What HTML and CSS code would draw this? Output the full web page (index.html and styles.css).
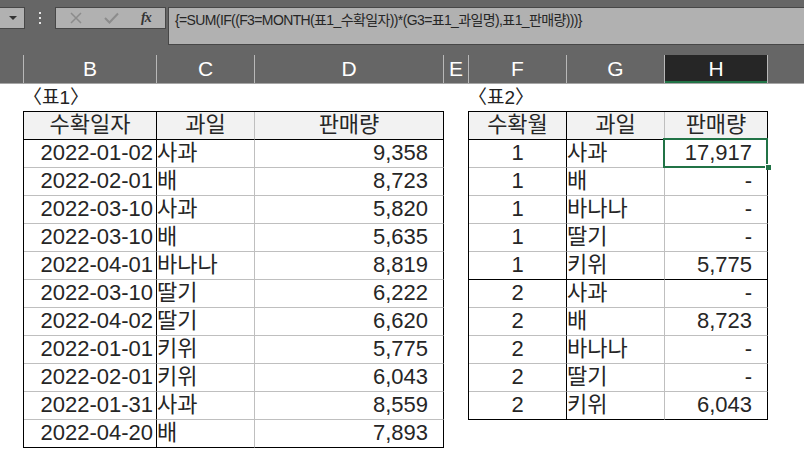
FILE: index.html
```html
<!DOCTYPE html>
<html lang="ko">
<head>
<meta charset="utf-8">
<link rel="stylesheet" href="styles.css">
</head>
<body>
<div class="app">
  <div class="toolbar">
    <div class="namebox">
      <svg class="drop" width="8" height="5" viewBox="0 0 8 5"><path d="M0 0H8L4 4Z" fill="#333"/></svg>
    </div>
    <div class="grip">
      <svg width="4" height="14" viewBox="0 0 4 14"><rect x="1" y="1" width="2" height="2" fill="#e6e6e6"/><rect x="1" y="6" width="2" height="2" fill="#e6e6e6"/><rect x="1" y="11" width="2" height="2" fill="#e6e6e6"/></svg>
    </div>
    <div class="fxbox">
      <svg class="ico-x" width="12" height="12" viewBox="0 0 12 12"><path d="M1 1L11 11M11 1L1 11" stroke="#8c8c8c" stroke-width="1.5" fill="none"/></svg>
      <svg class="ico-ok" width="15" height="12" viewBox="0 0 15 12"><path d="M1 6L5.5 10.5L14 1.5" stroke="#8c8c8c" stroke-width="2" fill="none"/></svg>
      <span class="fx">fx</span>
    </div>
    <div class="formula">{=SUM(IF((F3=MONTH(표1_수확일자))*(G3=표1_과일명),표1_판매량)))}</div>
  </div>

  <div class="colheads">
    <div class="ch ch-a"></div>
    <div class="ch ch-b">B</div>
    <div class="ch ch-c">C</div>
    <div class="ch ch-d">D</div>
    <div class="ch ch-e">E</div>
    <div class="ch ch-f">F</div>
    <div class="ch ch-g">G</div>
    <div class="ch ch-h">H</div>
    <div class="ch ch-rest"></div>
  </div>

  <div class="sheet">
    <div class="block block1">
      <div class="title">〈표1〉</div>
      <div class="grid t1">
        <div class="c hd dark">수확일자</div><div class="c hd">과일</div><div class="c hd last">판매량</div>

        <div class="c date dark">2022-01-02</div><div class="c fruit">사과</div><div class="c num last">9,358</div>
        <div class="c date dark">2022-02-01</div><div class="c fruit">배</div><div class="c num last">8,723</div>
        <div class="c date dark">2022-03-10</div><div class="c fruit">사과</div><div class="c num last">5,820</div>
        <div class="c date dark">2022-03-10</div><div class="c fruit">배</div><div class="c num last">5,635</div>
        <div class="c date dark">2022-04-01</div><div class="c fruit">바나나</div><div class="c num last">8,819</div>
        <div class="c date dark">2022-03-10</div><div class="c fruit">딸기</div><div class="c num last">6,222</div>
        <div class="c date dark">2022-04-02</div><div class="c fruit">딸기</div><div class="c num last">6,620</div>
        <div class="c date dark">2022-01-01</div><div class="c fruit">키위</div><div class="c num last">5,775</div>
        <div class="c date dark">2022-02-01</div><div class="c fruit">키위</div><div class="c num last">6,043</div>
        <div class="c date dark">2022-01-31</div><div class="c fruit">사과</div><div class="c num last">8,559</div>
        <div class="c date dark bot">2022-04-20</div><div class="c fruit bot">배</div><div class="c num last bot">7,893</div>
      </div>
    </div>

    <div class="block block2">
      <div class="title">〈표2〉</div>
      <div class="grid t2">
        <div class="c hd dark">수확월</div><div class="c hd">과일</div><div class="c hd last">판매량</div>

        <div class="c mon dark">1</div><div class="c fruit">사과</div><div class="c num last sel">17,917<span class="selbox"></span><span class="handle"></span></div>
        <div class="c mon dark">1</div><div class="c fruit">배</div><div class="c num last">-</div>
        <div class="c mon dark">1</div><div class="c fruit">바나나</div><div class="c num last">-</div>
        <div class="c mon dark">1</div><div class="c fruit">딸기</div><div class="c num last">-</div>
        <div class="c mon dark bot">1</div><div class="c fruit bot">키위</div><div class="c num last bot">5,775</div>
        <div class="c mon dark">2</div><div class="c fruit">사과</div><div class="c num last">-</div>
        <div class="c mon dark">2</div><div class="c fruit">배</div><div class="c num last">8,723</div>
        <div class="c mon dark">2</div><div class="c fruit">바나나</div><div class="c num last">-</div>
        <div class="c mon dark">2</div><div class="c fruit">딸기</div><div class="c num last">-</div>
        <div class="c mon dark bot">2</div><div class="c fruit bot">키위</div><div class="c num last bot">6,043</div>
      </div>
    </div>
  </div>
</div>
</body>
</html>
```

FILE: styles.css
```css
* { box-sizing: border-box; }

html, body {
  margin: 0;
  padding: 0;
  background: #ffffff;
}

.app {
  width: 804px;
  height: 474px;
  overflow: hidden;
  background: #ffffff;
  font-family: "Liberation Sans", "Noto Sans CJK KR", sans-serif;
}

/* ---------- formula bar ---------- */
.toolbar {
  height: 55px;
  background: #666666;
  display: flex;
  align-items: flex-start;
  padding-top: 7px;
}

.namebox {
  width: 25px;
  height: 22px;
  background: #b1b1b1;
  border: 1px solid #474747;
  border-left: none;
  display: flex;
  align-items: center;
  justify-content: flex-end;
  padding-right: 7px;
}

.grip {
  width: 30px;
  height: 22px;
  display: flex;
  align-items: center;
  justify-content: center;
}

.fxbox {
  width: 111px;
  height: 22px;
  background: #b1b1b1;
  border: 1px solid #474747;
  display: flex;
  align-items: center;
  padding-left: 14px;
}

.ico-x { margin-right: 22px; }
.ico-ok { margin-right: 22px; }

.fx {
  font-family: "Liberation Serif", serif;
  font-style: italic;
  font-weight: bold;
  font-size: 14px;
  color: #333333;
  letter-spacing: -1px;
}

.formula {
  flex: 1;
  margin-left: 2px;
  height: 38px;
  background: #b1b1b1;
  border: 1px solid #474747;
  border-right: none;
  padding: 3px 0 0 6px;
  font-size: 14px;
  line-height: 18px;
  letter-spacing: -0.62px;
  color: #262626;
  white-space: nowrap;
}

/* ---------- column headers ---------- */
.colheads {
  display: flex;
  height: 29px;
  background: #666666;
  border-bottom: 1px solid #a6a6a6;
}

.ch {
  height: 28px;
  color: #ffffff;
  font-size: 21px;
  line-height: 28px;
  text-align: center;
  border-left: 1px solid #b8b8b8;
}

.ch-a { width: 23px; border-left: none; }
.ch-b { width: 133px; }
.ch-c { width: 98px; }
.ch-d { width: 189px; }
.ch-e { width: 25px; }
.ch-f { width: 98px; }
.ch-g { width: 98px; }
.ch-h {
  width: 104px;
  background: #262626;
  border-right: 1px solid #b8b8b8;
  box-shadow: inset 0 -2px 0 #217346;
}
.ch-rest { flex: 1; border-left: none; }

/* ---------- sheet ---------- */
.sheet {
  display: flex;
  align-items: flex-start;
  padding-left: 23px;
}

.block2 { margin-left: 24px; }

.title {
  height: 27px;
  font-size: 19px;
  line-height: 27px;
  color: #222222;
  padding-left: 0;
}

.grid {
  display: grid;
  grid-auto-rows: 28px;
  border-left: 1px solid #000000;
  border-top: 1px solid #000000;
}

.t1 { grid-template-columns: 133px 98px 189px; }
.t2 { grid-template-columns: 98px 98px 103px; }

.c {
  border-right: 1px solid #bfbfbf;
  border-bottom: 1px solid #bfbfbf;
  font-size: 22px;
  line-height: 26px;
  color: #262626;
  white-space: nowrap;
}

.c.dark { border-right-color: #000000; }
.c.last { border-right-color: #000000; }
.c.bot { border-bottom-color: #000000; }

.hd {
  background: #f2f2f2;
  text-align: center;
  border-bottom-color: #000000;
}

.date { text-align: right; padding-right: 3px; }
.fruit { text-align: left; padding-left: 0; }
.num { text-align: right; padding-right: 15px; }
.mon { text-align: center; }

.sel { position: relative; }

.selbox {
  position: absolute;
  left: -2px;
  top: -2px;
  right: -1px;
  bottom: -1px;
  border: 2px solid #217346;
}

.handle {
  position: absolute;
  left: 100px;
  top: 24px;
  width: 6px;
  height: 6px;
  background: #217346;
  border-left: 1px solid #ffffff;
  border-top: 1px solid #ffffff;
}
```
